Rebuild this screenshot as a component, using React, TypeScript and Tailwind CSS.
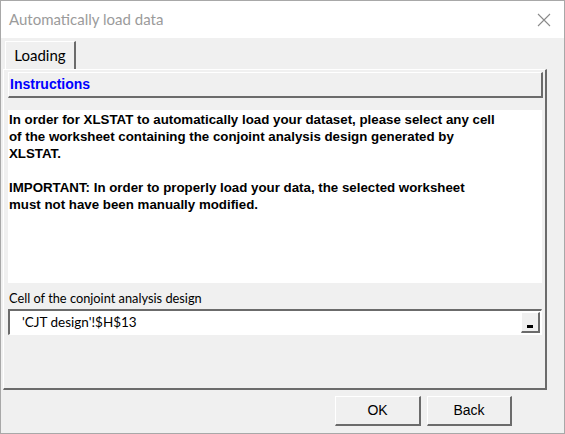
import React from "react";

export default function App() {
  const tahoma = { fontFamily: '"Liberation Sans", Arial, sans-serif' };
  const segoe = { fontFamily: 'Lato, "Noto Sans", sans-serif' };
  return (
    <div className="w-[565px] h-[434px] border border-[#a8a8a8] bg-[#f0f0f0] flex flex-col overflow-hidden" style={tahoma}>
      <div className="h-[37px] bg-white flex items-center justify-between pl-[8px] pr-[13px] shrink-0">
        <span className="text-[15px] text-[#9b9b9b]" style={segoe}>
          Automatically load data
        </span>
        <svg width="14" height="14" viewBox="0 0 14 14" className="mt-[1px]">
          <path d="M1 1 L13 13 M13 1 L1 13" stroke="#8a8a8a" strokeWidth="1.1" />
        </svg>
      </div>
      <div className="flex-1 flex flex-col px-[2px] pt-[3px]">
        <div className="flex pl-[2px]">
          <div className="w-[71px] h-[28px] border-t border-l border-white border-r-2 border-r-[#6b6b6b] bg-[#f0f0f0] flex items-center justify-center text-[15px] text-black pb-[1px]" style={segoe}>
            Loading
          </div>
        </div>
        <div className="w-[544px] h-[321px] border-t border-l border-white border-r-2 border-b-2 border-r-[#6b6b6b] border-b-[#6b6b6b] flex flex-col pl-[4px] pr-[2px] pt-[2px]">
          <div className="w-[535px] h-[26px] bg-[#f0f0f0] border-t border-l border-white border-r-2 border-b-2 border-r-[#6b6b6b] border-b-[#6b6b6b] flex items-center pl-[1px]">
            <span className="text-[14px] font-bold text-[#0000ff]">Instructions</span>
          </div>
          <div className="mt-[12px] w-[534px] h-[173px] bg-white pl-[1px] pt-[1px] text-[13.3px] font-bold text-black leading-[17px]">
            <div>In order for XLSTAT to automatically load your dataset, please select any cell</div>
            <div>of the worksheet containing the conjoint analysis design generated by</div>
            <div>XLSTAT.</div>
            <div className="h-[17px]" />
            <div>IMPORTANT: In order to properly load your data, the selected worksheet</div>
            <div>must not have been manually modified.</div>
          </div>
          <div className="mt-[7px] pl-[1px] text-[12.8px] text-black leading-[17px]" style={segoe}>Cell of the conjoint analysis design</div>
          <div className="mt-[2px] w-[534px] h-[26px] bg-white border-t-2 border-l-2 border-t-[#6b6b6b] border-l-[#6b6b6b] border-b border-r border-white flex items-center">
            <span className="flex-1 pl-[12px] text-[13.5px] text-black" style={segoe}>'CJT design'!$H$13</span>
            <div className="w-[19px] h-[21px] bg-[#f0f0f0] border-t border-l border-white border-r-2 border-b-2 border-r-[#6b6b6b] border-b-[#6b6b6b] flex items-end justify-center pb-[3px] mr-[1px]">
              <div className="w-[6px] h-[3px] bg-black" />
            </div>
          </div>
        </div>
        <div className="flex justify-end gap-[6px] pr-[50px] pt-[6px]">
          <div className="w-[86px] h-[30px] bg-[#f0f0f0] border-t border-l border-white border-r-2 border-b-2 border-r-[#6b6b6b] border-b-[#6b6b6b] flex items-center justify-center text-[14px] text-black">OK</div>
          <div className="w-[85px] h-[30px] bg-[#f0f0f0] border-t border-l border-white border-r-2 border-b-2 border-r-[#6b6b6b] border-b-[#6b6b6b] flex items-center justify-center text-[14px] text-black">Back</div>
        </div>
      </div>
    </div>
  );
}
